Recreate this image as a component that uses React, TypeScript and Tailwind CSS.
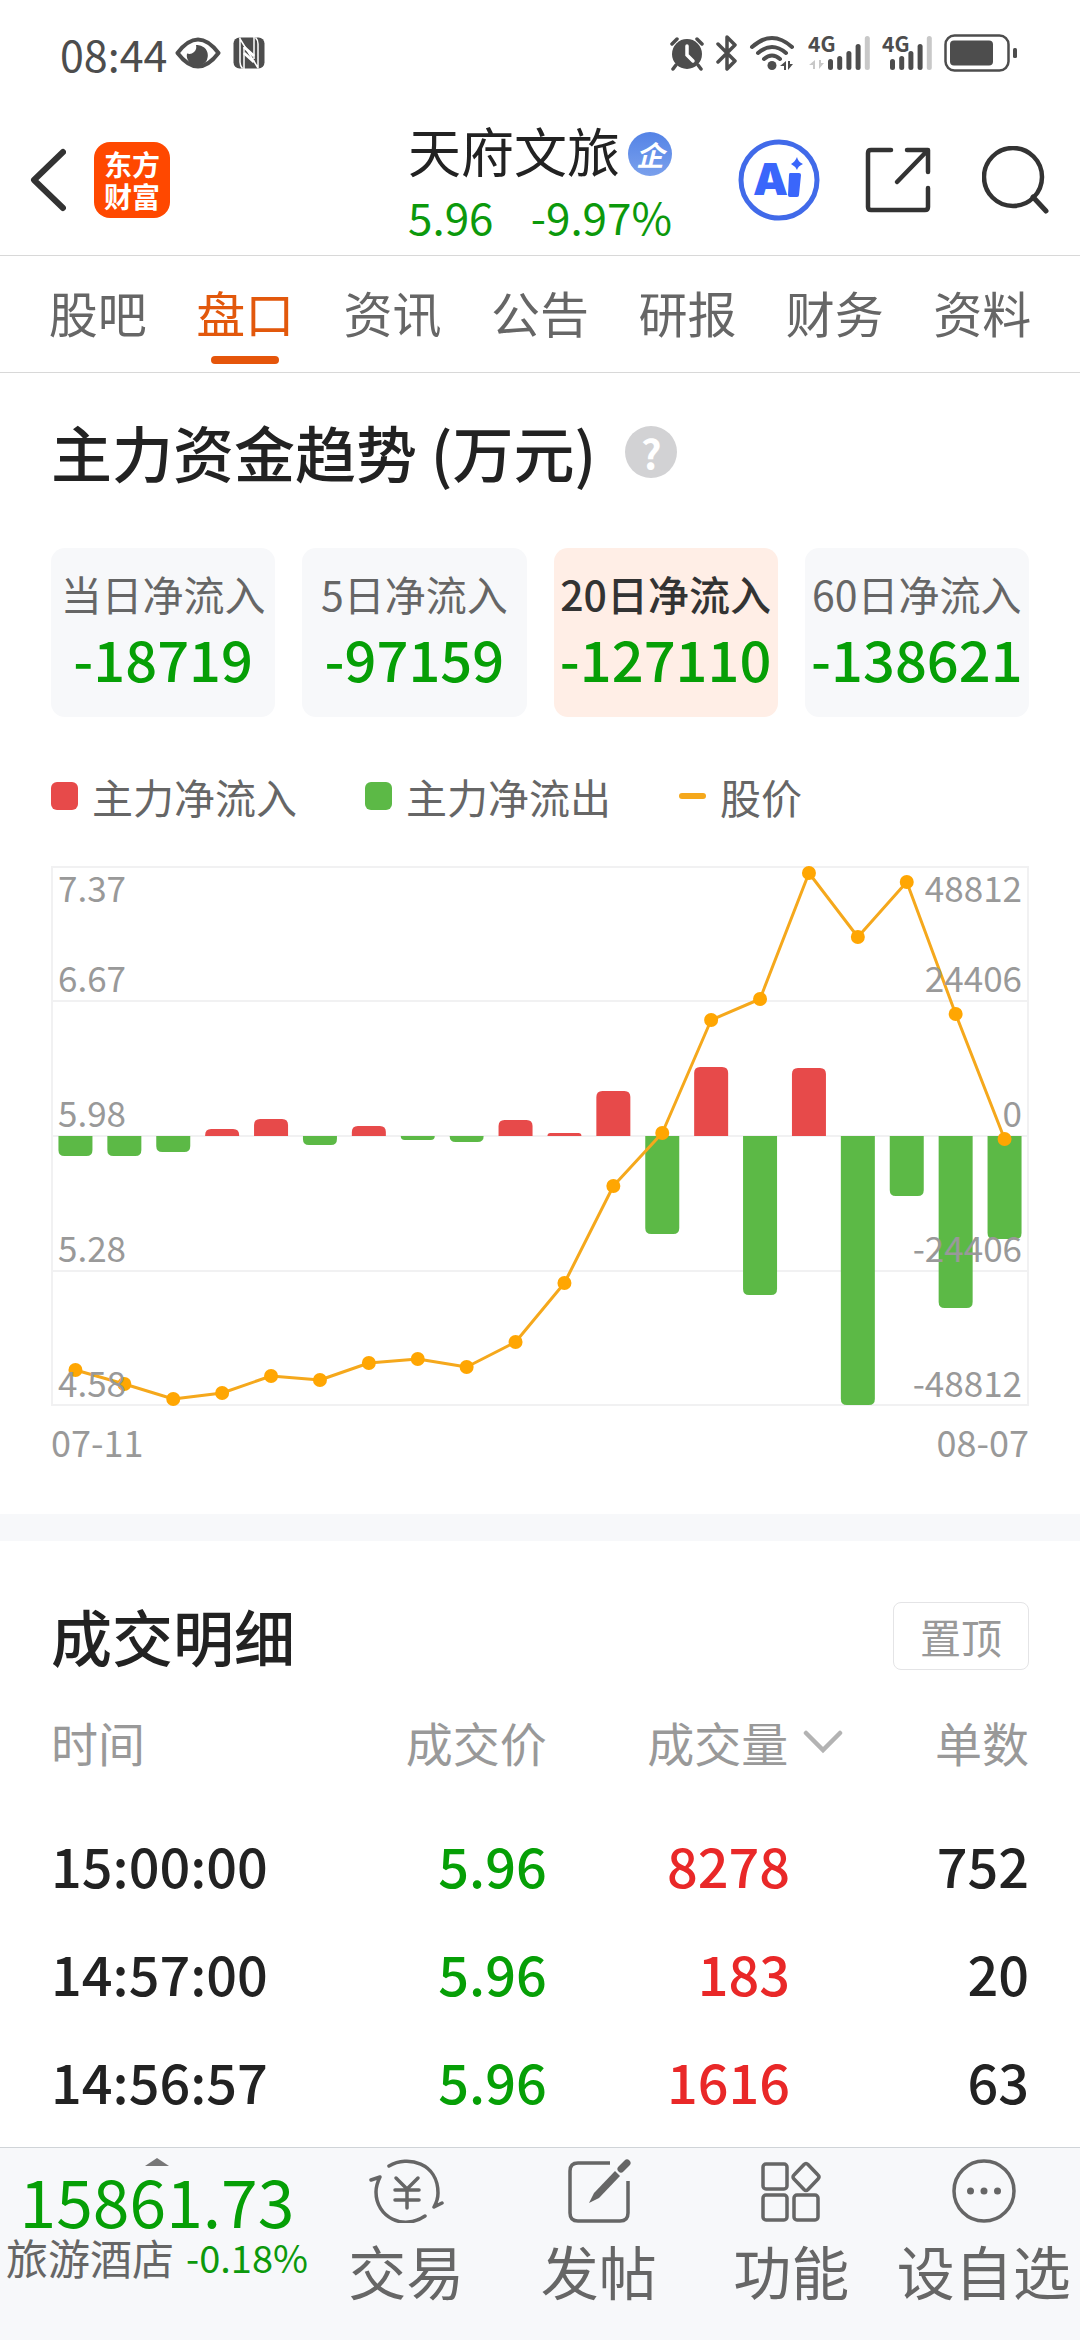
import { ReactNode } from 'react';
import clsx from 'clsx';

const TABS = ['股吧', '盘口', '资讯', '公告', '研报', '财务', '资料'];

const FLOWS = [
  { label: '当日净流入', value: '-18719' },
  { label: '5日净流入', value: '-97159' },
  { label: '20日净流入', value: '-127110' },
  { label: '60日净流入', value: '-138621' },
];

const TRADES = [
  { time: '15:00:00', price: '5.96', volume: '8278', count: '752' },
  { time: '14:57:00', price: '5.96', volume: '183', count: '20' },
  { time: '14:56:57', price: '5.96', volume: '1616', count: '63' },
];

// Chart geometry, in viewBox units
const CHART_W = 978;
const CHART_H = 540;
const STEP = CHART_W / 20;
const ZERO = CHART_H / 2;

// Net flow per day, positive is inflow
const BARS = [-20, -20, -16, 7, 17, -9, 10, -4, -6, 16, 3, 45, -98, 69, -159, 68, -269, -60, -172, -103];
// Closing price per day, as y position
const PRICES = [504, 518, 533, 527, 510, 514, 497, 493, 501, 476, 417, 320, 267, 154, 133, 7, 71, 16, 148, 273];

const AXIS = [
  { y: 36, price: '7.37', flow: '48812' },
  { y: 126, price: '6.67', flow: '24406' },
  { y: 261, price: '5.98', flow: '0' },
  { y: 396, price: '5.28', flow: '-24406' },
  { y: 531, price: '4.58', flow: '-48812' },
];

function barPath(index: number, value: number) {
  const x = STEP * index + STEP / 2 - 17;
  const r = Math.min(6, Math.abs(value));
  const dir = value > 0 ? -1 : 1;
  const end = ZERO - value;
  return `M${x} ${ZERO}V${end - dir * r}Q${x} ${end} ${x + r} ${end}H${x + 34 - r}Q${x + 34} ${end} ${x + 34} ${end - dir * r}V${ZERO}Z`;
}

function SignalIcon({ arrows }: { arrows?: boolean }) {
  const shift = arrows ? 0 : -12;
  const tops = [58, 55, 50, 43, 35];
  return (
    <svg viewBox={arrows ? '0 24 63 56' : '0 24 51 56'} className={arrows ? 'h-14 w-[63px]' : 'h-14 w-[51px]'}>
      <text x="0" y="51" fontSize="21" fontWeight="700" fill="#4d4d4d">4G</text>
      {arrows && (
        <path d="M7 59v9h-2v-4h-4zM11 59v9l5-6h-3v-3z" fill="#c8c8c8" />
      )}
      {tops.map((top, i) => (
        <rect key={top} x={20 + shift + i * 9.2} y={top} width="5" height={69 - top} rx="2.5" fill={i === 4 ? '#c8c8c8' : '#4d4d4d'} />
      ))}
    </svg>
  );
}

function StatusBar() {
  return (
    <div className="flex h-[106px] items-center justify-between pr-[62px] pl-[60px] text-[#4d4d4d]">
      <div className="flex items-center">
        <span className="text-[43px] leading-[56px]">08:44</span>
        <svg viewBox="0 0 46 32" className="ml-2 h-8 w-[46px]">
          <path d="M2.500 16Q23-11 43.500 16Q23 43 2.500 16Z" fill="none" stroke="currentColor" strokeWidth="4" strokeLinejoin="round" />
          <path d="M21 8a7 7 0 0 1-9 8.500a10.500 10.500 0 1 0 9-8.500z" fill="currentColor" />
        </svg>
        <svg viewBox="0 0 32 32" className="ml-3 h-8 w-8">
          <rect x="0.500" y="0.500" width="31" height="31" rx="6" fill="currentColor" />
          <path d="M7 0.500V25q0 4 2.500 6.500M25 31.500V7q0-4-2.500-6.500M6.500 1L25 31M11 10v22M21 22V0" fill="none" stroke="#fff" strokeWidth="1.500" />
          <path d="M11 10l10 9M11 16l10 9" fill="none" stroke="#fff" strokeWidth="3" />
        </svg>
      </div>
      <div className="flex items-center">
        <svg viewBox="0 0 36 36" className="h-9 w-9">
          <path d="M3 9l5-5M33 9l-5-5M7 30l-3 4M29 30l3 4" stroke="currentColor" strokeWidth="3.500" strokeLinecap="round" />
          <circle cx="18" cy="19" r="15" fill="currentColor" />
          <path d="M18 11v9l6 6" fill="none" stroke="#fff" strokeWidth="3.500" strokeLinecap="round" />
        </svg>
        <svg viewBox="0 0 24 36" className="ml-2.5 h-9 w-6">
          <path d="M3 9l17 17-8 8V2l8 8L3 27" fill="none" stroke="currentColor" strokeWidth="3.500" strokeLinecap="round" strokeLinejoin="round" />
        </svg>
        <svg viewBox="0 0 46 36" className="ml-2.5 h-9 w-[46px]">
          <path d="M3 12Q23-6 43 12M9 18Q23 6 37 18M15 24Q23 17 31 24" fill="none" stroke="currentColor" strokeWidth="4" strokeLinecap="round" />
          <circle cx="23" cy="30.500" r="4.500" fill="currentColor" />
          <path d="M37 26v9h-2v-4h-4zM39 26v9l5-6h-3v-3z" fill="currentColor" />
        </svg>
        <div className="ml-[13px] flex items-center gap-[11px]">
          <SignalIcon arrows />
          <SignalIcon />
        </div>
        <svg viewBox="0 0 74 38" className="ml-[11px] h-[38px] w-[74px]">
          <rect x="1.500" y="1.500" width="63" height="35" rx="9" fill="none" stroke="currentColor" strokeWidth="2.500" />
          <rect x="6" y="6.500" width="43" height="25" rx="4" fill="currentColor" />
          <rect x="69" y="14" width="4" height="10" rx="1.500" fill="currentColor" />
        </svg>
      </div>
    </div>
  );
}

function Header() {
  return (
    <header className="grid h-[150px] grid-cols-[1fr_auto_1fr] items-center border-b border-[#d8d8d8] px-[30px] pb-0.5">
      <div className="flex items-center gap-7">
        <button type="button" aria-label="返回">
          <svg viewBox="0 0 36 64" className="h-16 w-9">
            <path d="M33 4L4 32L33 60" fill="none" stroke="#333" strokeWidth="6" strokeLinecap="round" strokeLinejoin="round" />
          </svg>
        </button>
        <a href="#home" className="flex h-[76px] w-[76px] items-center justify-center rounded-2xl bg-[#ff4800] text-center text-[28px] leading-[32px] font-bold text-white">
          <span className="w-14">东方财富</span>
        </a>
      </div>

      <div>
        <div className="flex items-center gap-2">
          <h1 className="text-[53px] leading-[72px] text-[#222]">天府文旅</h1>
          <span className="mt-2 flex h-11 w-11 items-center justify-center rounded-full bg-linear-to-b from-[#5483e6] to-[#7aa0ec] text-[28px] leading-[40px] font-bold text-white italic">企</span>
        </div>
        <div className="flex justify-between text-[44px] leading-[60px] text-[#0c990c]">
          <span>5.96</span>
          <span>-9.97%</span>
        </div>
      </div>

      <div className="flex items-center justify-end">
        <button type="button" aria-label="Ai">
          <svg viewBox="0 0 82 82" className="h-[82px] w-[82px]">
            <circle cx="41" cy="41" r="38" fill="none" stroke="#416ae9" strokeWidth="5" />
            <text x="15" y="56" fontSize="44" fontWeight="900" fill="#3a66fb" fontFamily="Inter, sans-serif">A</text>
            <path d="M54 34h7q2 0 2 2l-2 20q0 2-2 2h-7q-2 0-2-2l1-20q0-2 1-2z" fill="#3a66fb" />
            <path d="M59 18q1 5 6 7q-5 2-6 6q-2-4-6-6q4-2 6-7z" fill="#3a66fb" />
          </svg>
        </button>
        <button type="button" aria-label="分享" className="ml-11">
          <svg viewBox="0 0 68 68" className="h-[68px] w-[68px]">
            <path d="M27 4H7Q4 4 4 7V61Q4 64 7 64H61Q64 64 64 61V42M43 4H64V26M63 5L33 36" fill="none" stroke="#333" strokeWidth="4.500" strokeLinecap="round" strokeLinejoin="round" />
          </svg>
        </button>
        <button type="button" aria-label="搜索" className="ml-[50px]">
          <svg viewBox="0 0 68 68" className="h-[68px] w-[68px]">
            <circle cx="31" cy="31" r="29" fill="none" stroke="#333" strokeWidth="4.500" />
            <path d="M51 51L64 65" stroke="#333" strokeWidth="5" strokeLinecap="round" />
          </svg>
        </button>
      </div>
    </header>
  );
}

function FlowChart() {
  const points = PRICES.map((y, i) => `${STEP * i + STEP / 2},${y}`).join(' ');

  return (
    <svg viewBox={`0 0 ${CHART_W} ${CHART_H}`} className="mt-[42px] block h-auto w-full overflow-visible">
      <path d="M1 1H977V539H1ZM0 135H978M0 270H978M0 405H978" fill="none" stroke="#f1f1f2" strokeWidth="2" />
      {BARS.map((value, i) => (
        <path key={i} d={barPath(i, value)} fill={value > 0 ? '#e74a4a' : '#5cb946'} />
      ))}
      <polyline points={points} fill="none" stroke="#f5a81c" strokeWidth="3" strokeLinejoin="round" />
      {PRICES.map((y, i) => (
        <circle key={i} cx={STEP * i + STEP / 2} cy={y} r="7" fill="#ffa602" />
      ))}
      {AXIS.map((row) => (
        <g key={row.y} fill="#999" fontSize="35">
          <text x="7" y={row.y}>{row.price}</text>
          <text x="971" y={row.y} textAnchor="end">{row.flow}</text>
        </g>
      ))}
    </svg>
  );
}

function FundTrend() {
  return (
    <section className="px-[51px] pt-[43px] pb-[49px]">
      <div className="flex items-center gap-[29px]">
        <h2 className="text-[61px] leading-[72px] font-medium text-[#222]">主力资金趋势 (万元)</h2>
        <button type="button" aria-label="说明" className="flex h-[52px] w-[52px] items-center justify-center rounded-full bg-[#d2d2d4] text-[40px] leading-[52px] font-bold text-white">
          ?
        </button>
      </div>

      <div className="mt-[60px] grid grid-cols-4 gap-[27px]">
        {FLOWS.map((flow, i) => (
          <button
            key={flow.label}
            type="button"
            className={clsx('flex flex-col items-center rounded-[14px] pt-[17px] pb-[22px] whitespace-nowrap', i === 2 ? 'bg-[#ffeee6]' : 'bg-[#f7f8fa]')}
          >
            <span className={clsx('text-[41px] leading-[56px]', i === 2 ? 'font-medium text-[#333]' : 'text-[#666]')}>{flow.label}</span>
            <span className="text-[56px] leading-[74px] font-medium text-[#069f06]">{flow.value}</span>
          </button>
        ))}
      </div>

      <div className="mt-[51px] flex gap-[68px] text-[41px] leading-[56px] text-[#666]">
        <div className="flex items-center gap-3.5">
          <span className="h-7 w-[27px] rounded-md bg-[#e74a4a]" />
          主力净流入
        </div>
        <div className="flex items-center gap-3.5">
          <span className="h-7 w-[27px] rounded-md bg-[#5cb946]" />
          主力净流出
        </div>
        <div className="flex items-center gap-3.5">
          <span className="h-[6px] w-[27px] rounded-sm bg-[#f5a81c]" />
          股价
        </div>
      </div>

      <FlowChart />
      <div className="mt-[11px] flex justify-between text-[36px] leading-[48px] text-[#999]">
        <span>07-11</span>
        <span>08-07</span>
      </div>
    </section>
  );
}

function TradeDetails() {
  return (
    <section className="px-[51px] pt-[59px] pb-3">
      <div className="flex items-center justify-between">
        <h2 className="text-[61px] leading-[72px] font-medium text-[#222]">成交明细</h2>
        <button type="button" className="h-[68px] w-[136px] rounded-lg border border-[#e4e4e6] text-[41px] leading-[60px] text-[#999]">置顶</button>
      </div>

      <table className="w-full table-fixed">
        <thead>
          <tr className="h-[139px] text-[47px] leading-[64px] text-[#999]">
            <th className="w-[25%] text-left font-normal">时间</th>
            <th className="w-[26%] pr-[3px] text-right font-normal">成交价</th>
            <th className="w-[30%] font-normal">
              <button type="button" className="flex w-full items-center justify-end gap-[15px]">
                成交量
                <svg viewBox="0 0 40 24" className="h-6 w-10">
                  <path d="M3 3L20 20L37 3" fill="none" stroke="#b3b3b3" strokeWidth="4.500" strokeLinecap="round" />
                </svg>
              </button>
            </th>
            <th className="text-right font-normal">单数</th>
          </tr>
        </thead>
        <tbody>
          {TRADES.map((trade) => (
            <tr key={trade.time} className="h-[108px] text-right text-[54px] leading-[72px] font-medium text-[#222]">
              <td className="text-left">{trade.time}</td>
              <td className="pr-[3px] text-[#069f06]">{trade.price}</td>
              <td className="pr-[53px] text-[#e92828]">{trade.volume}</td>
              <td>{trade.count}</td>
            </tr>
          ))}
        </tbody>
      </table>
    </section>
  );
}

function ActionButton({ label, children }: { label: string; children: ReactNode }) {
  return (
    <button type="button" className="flex flex-1 flex-col items-center gap-2.5 pt-[11px] text-[#666]">
      <svg viewBox="0 0 76 64" className="h-16 w-[76px]" fill="none" stroke="currentColor" strokeWidth="3.500" strokeLinecap="round" strokeLinejoin="round">
        {children}
      </svg>
      <span className="text-[58px] leading-[74px] whitespace-nowrap">{label}</span>
    </button>
  );
}

function BottomBar() {
  return (
    <footer className="sticky bottom-0 flex h-[193px] border-t border-[#d0d4d8] bg-[#f7f8fa]">
      <div className="flex w-[310px] flex-col items-center pt-2.5 pl-1 whitespace-nowrap">
        <svg viewBox="0 0 24 8" className="h-2 w-6">
          <path d="M0 8L12 0L24 8Z" fill="#777" />
        </svg>
        <span className="text-[66px] leading-[66px] text-[#069f06]">15861.73</span>
        <div className="flex items-center gap-3 leading-[50px]">
          <span className="text-[42px] text-[#666]">旅游酒店</span>
          <span className="text-[38px] text-[#0c990c]">-0.18%</span>
        </div>
      </div>
      <ActionButton label="交易">
        <path d="M21 7C40-4 70 4 70 34Q70 41 66 48L74 44M3 21L12 18Q8 26 8 33C8 58 35 72 57 57" />
        <path d="M28 19L39 30L50 19M39 30V49M27 31H51M27 41H51" />
      </ActionButton>
      <ActionButton label="发帖">
        <path d="M49 4H17Q9 4 9 12V54Q9 62 17 62H59Q67 62 67 54V22" strokeLinecap="butt" />
        <path d="M66 4L60 10" strokeWidth="7" />
        <path d="M54 12L33 34L28 44L38 39L59 17Z" fill="currentColor" stroke="none" />
      </ActionButton>
      <ActionButton label="功能">
        <rect x="10" y="5" width="24" height="25" rx="3" />
        <rect x="10" y="36" width="24" height="25" rx="3" />
        <rect x="41" y="36" width="24" height="25" rx="3" />
        <path d="M51 5.500Q53 3.500 55 5.500L65 16Q67 18 65 20L55 30.500Q53 32.500 51 30.500L41 20Q39 18 41 16Z" />
      </ActionButton>
      <ActionButton label="设自选">
        <circle cx="38" cy="32" r="30" />
        <g fill="currentColor" stroke="none">
          <circle cx="24.500" cy="32" r="3.500" />
          <circle cx="38" cy="32" r="3.500" />
          <circle cx="51.500" cy="32" r="3.500" />
        </g>
      </ActionButton>
    </footer>
  );
}

export default function App() {
  return (
    <div className="flex min-h-screen flex-col bg-white font-['Noto_Sans_CJK_SC',sans-serif]">
      <StatusBar />
      <Header />

      <nav className="flex border-b border-[#d8d8d8] px-6 pt-6 pb-2">
        {TABS.map((tab) => (
          <a key={tab} href={`#${tab}`} className={clsx('flex flex-1 flex-col items-center text-[49px] leading-[64px]', tab === '盘口' ? 'text-[#e2580c]' : 'text-[#666]')}>
            {tab}
            <span className={clsx('mt-3 h-2 w-[68px] rounded-full', tab === '盘口' && 'bg-[#e5550a]')} />
          </a>
        ))}
      </nav>

      <main className="flex-1">
        <FundTrend />
        <div className="h-[27px] bg-[#f7f8fa]" />
        <TradeDetails />
      </main>

      <BottomBar />
    </div>
  );
}
